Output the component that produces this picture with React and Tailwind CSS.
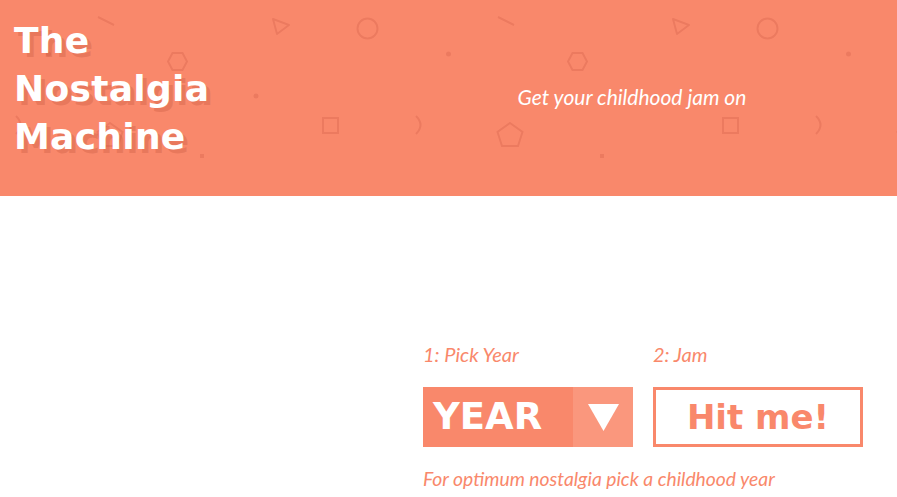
import React from 'react';

function ShapesBackground() {
  return (
    <svg className="absolute inset-0 h-full w-full" aria-hidden="true">
      <defs>
        <pattern id="confetti" width="400" height="200" patternUnits="userSpaceOnUse">
          <g fill="none" stroke="#ec7a5f" strokeWidth="2">
            <line x1="98" y1="17" x2="114" y2="25" />
            <polygon points="273,19 289,25 277,34" strokeLinejoin="round" />
            <circle cx="367.5" cy="28.5" r="10" />
            <polygon points="168,61.5 172.5,53 182.5,53 187,61.5 182.5,70 172.5,70" />
            <rect x="323" y="118" width="15" height="15" />
            <path d="M16 116 Q25 125 16 134" />
            <polygon points="110,123 122.5,132 118,146 102,146 97.5,132" />
          </g>
          <g fill="#ec7a5f">
            <circle cx="48.5" cy="54" r="2.5" />
            <circle cx="256" cy="96" r="2.5" />
            <rect x="200" y="154" width="4" height="4" />
          </g>
        </pattern>
      </defs>
      <rect width="100%" height="100%" fill="url(#confetti)" />
    </svg>
  );
}

export default function App() {
  return (
    <div className="min-h-[497px] w-full bg-white">
      {/* Header */}
      <header className="relative h-[196px] overflow-hidden bg-[#f9886b]">
        <ShapesBackground />
        <div className="relative flex h-full">
          <div className="w-[367px] shrink-0 pl-[14px] pt-[17px]">
            <h1 className="font-['DejaVu_Sans',sans-serif] text-[36px] font-bold leading-[48px] tracking-[0.3px] text-white [text-shadow:4px_4px_0_rgba(190,80,55,0.28)]">
              The
              <br />
              Nostalgia
              <br />
              Machine
            </h1>
          </div>
          <div className="flex flex-1 items-center justify-center pb-[2px]">
            <p className="font-['Lato',sans-serif] text-[21px] italic text-white">
              Get your childhood jam on
            </p>
          </div>
        </div>
      </header>

      {/* Picker */}
      <main className="flex justify-end pr-[34px] pt-[143px]">
        <div className="w-[440px]">
          <div className="flex gap-[20px] font-['Lato',sans-serif] text-[20px] italic text-[#f9886b]">
            <span className="w-[210px]">1: Pick Year</span>
            <span>2: Jam</span>
          </div>

          <div className="mt-[18px] flex gap-[20px]">
            <div className="flex h-[60px] w-[210px] bg-[#f9886b]">
              <div className="flex flex-1 items-center pl-[10px] font-['DejaVu_Sans',sans-serif] text-[37px] font-bold text-white">
                YEAR
              </div>
              <div className="flex w-[60px] items-center justify-center bg-[#fa977d]">
                <svg width="31" height="27" viewBox="0 0 31 27">
                  <polygon points="0,0 31,0 15.5,27" fill="#ffffff" />
                </svg>
              </div>
            </div>
            <button className="flex h-[60px] w-[210px] items-center justify-center border-[3px] border-[#f9886b] bg-white font-['DejaVu_Sans',sans-serif] text-[34px] font-bold text-[#f9886b]">
              Hit me!
            </button>
          </div>

          <p className="mt-[18px] font-['Lato',sans-serif] text-[19.3px] italic text-[#f9886b]">
            For optimum nostalgia pick a childhood year
          </p>
        </div>
      </main>
    </div>
  );
}
